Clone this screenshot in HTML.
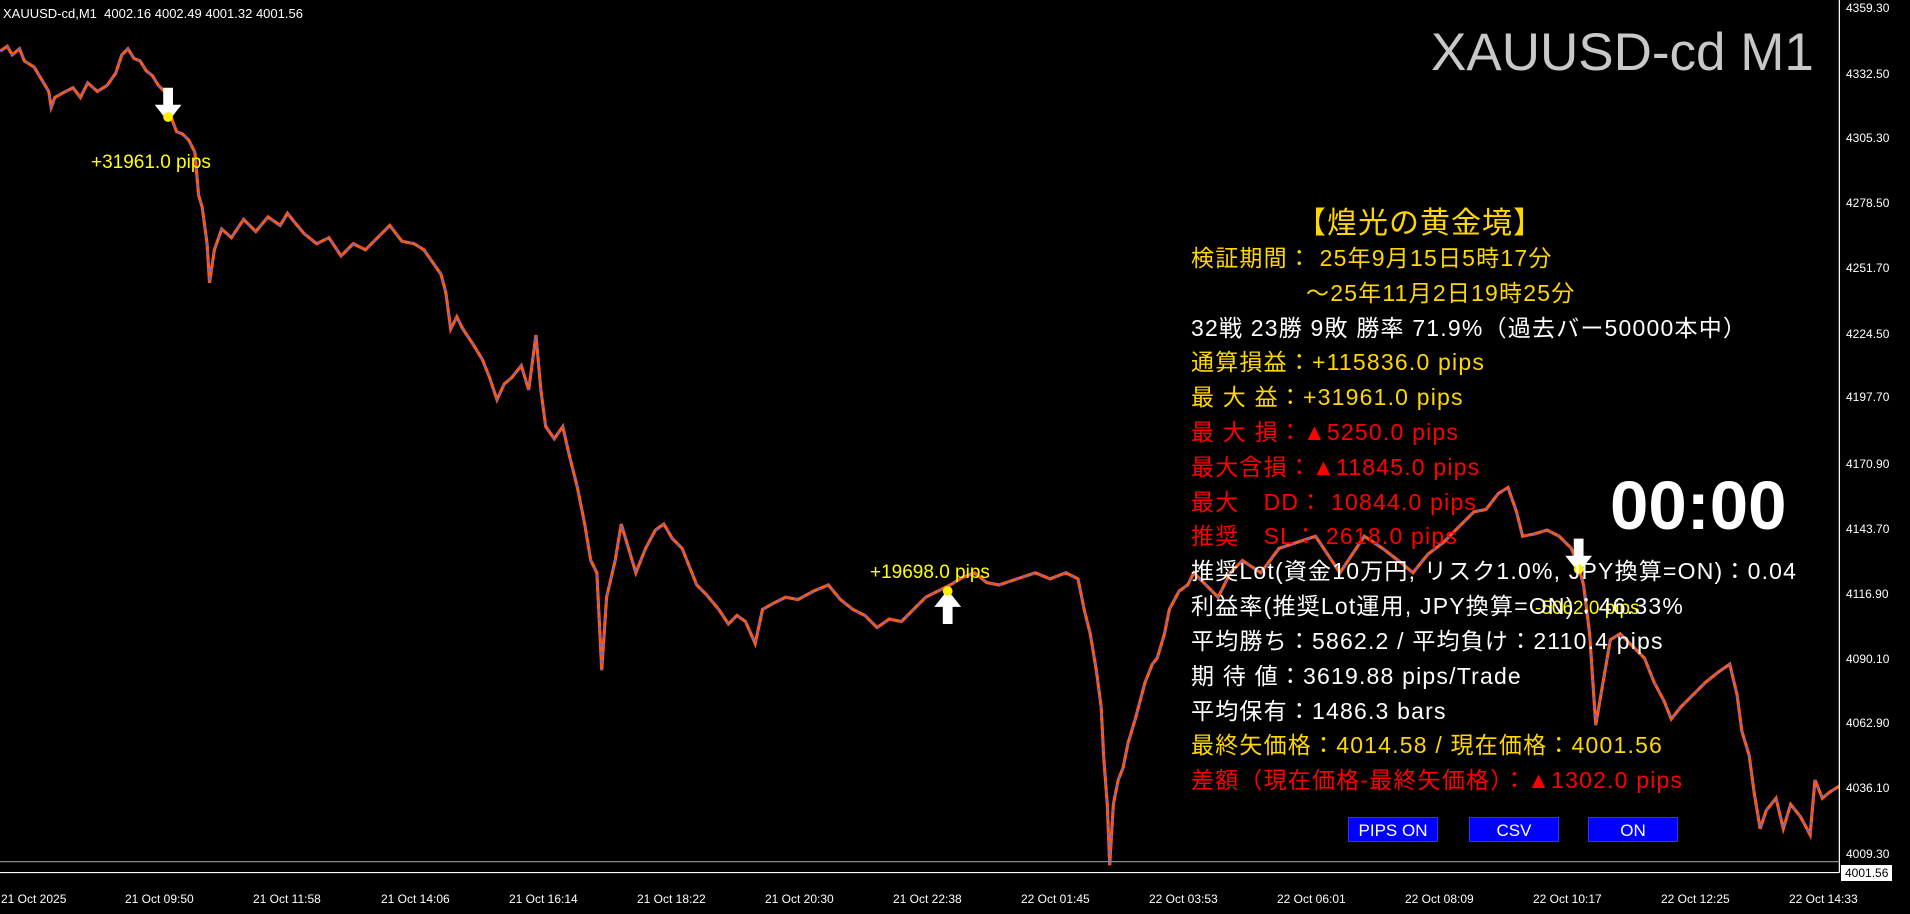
<!DOCTYPE html>
<html><head><meta charset="utf-8"><style>
html,body{margin:0;padding:0;background:#000;}
body{width:1910px;height:914px;position:relative;overflow:hidden;font-family:"Liberation Sans","Noto Sans CJK JP",sans-serif;}
.t{position:absolute;white-space:nowrap;}
.p{position:absolute;left:1191px;font-size:23px;line-height:28px;white-space:nowrap;letter-spacing:1.2px;font-family:"Liberation Sans","Noto Sans CJK JP",sans-serif;}
.y{color:#ffd700}.w{color:#fff}.r{color:#ff0000}
.ax{position:absolute;left:1846px;font-size:12px;color:#fff;line-height:14px;}
.tm{position:absolute;top:892px;font-size:12px;color:#fff;}
.btn{position:absolute;top:817px;width:90px;height:25px;background:#0000ff;color:#fff;font-size:17px;line-height:25px;text-align:center;border:1px solid #3030ff;box-sizing:border-box;}
</style></head><body>
<svg style="position:absolute;left:0;top:0" width="1910" height="914" viewBox="0 0 1568 750" preserveAspectRatio="none">
<polyline fill="none" stroke="#ff5a10" stroke-width="2.6" points="0,42 6,38 10,45 16,40 20,50 28,55 34,65 40,75 42,88 45,80 52,76 60,72 66,80 72,68 80,75 88,70 95,60 100,45 105,40 110,48 115,50 120,58 125,62 130,70 135,75 140,95 145,108 150,110 155,115 160,125 163,160 166,170 170,200 172,232 176,205 182,188 190,195 200,180 210,190 220,178 230,185 236,175 244,185 250,192 260,200 270,195 280,210 290,200 300,205 310,195 320,185 330,198 340,200 348,205 355,215 362,225 366,240 370,270 375,260 380,270 388,282 396,295 402,310 408,328 414,315 420,310 428,300 434,320 440,275 444,320 448,350 455,360 462,350 467,372 474,400 480,430 485,460 490,470 494,550 498,490 505,460 510,430 516,450 522,470 530,450 538,435 545,430 552,442 560,450 566,465 572,480 580,488 590,500 598,512 605,505 612,510 620,528 626,500 635,495 645,490 655,492 668,485 680,480 690,492 700,500 710,505 720,515 730,508 740,510 750,500 760,490 770,485 780,480 790,474 800,470 810,478 820,480 835,475 850,470 862,475 875,470 885,475 890,500 895,520 900,550 904,580 906,620 909,660 911,710 914,660 918,640 922,630 926,610 932,590 940,560 946,545 950,540 956,520 960,500 968,485 975,480 980,470 990,480 1000,490 1010,470 1020,460 1035,470 1050,450 1065,445 1080,440 1090,455 1100,470 1110,455 1120,440 1135,450 1148,460 1160,470 1172,455 1185,445 1200,430 1210,420 1220,418 1230,405 1238,400 1245,420 1250,440 1260,438 1270,435 1280,440 1290,450 1296,465 1300,480 1305,520 1310,595 1316,560 1322,525 1330,520 1340,530 1350,540 1358,560 1366,575 1372,590 1380,580 1390,570 1400,560 1410,552 1420,545 1426,570 1430,600 1436,620 1440,650 1445,680 1450,665 1458,655 1464,680 1470,660 1478,670 1486,685 1490,640 1496,655 1502,650 1510,645"/>
<polyline fill="none" stroke="#4a6cff" stroke-width="1.2" stroke-dasharray="3 4" points="0,42 6,38 10,45 16,40 20,50 28,55 34,65 40,75 42,88 45,80 52,76 60,72 66,80 72,68 80,75 88,70 95,60 100,45 105,40 110,48 115,50 120,58 125,62 130,70 135,75 140,95 145,108 150,110 155,115 160,125 163,160 166,170 170,200 172,232 176,205 182,188 190,195 200,180 210,190 220,178 230,185 236,175 244,185 250,192 260,200 270,195 280,210 290,200 300,205 310,195 320,185 330,198 340,200 348,205 355,215 362,225 366,240 370,270 375,260 380,270 388,282 396,295 402,310 408,328 414,315 420,310 428,300 434,320 440,275 444,320 448,350 455,360 462,350 467,372 474,400 480,430 485,460 490,470 494,550 498,490 505,460 510,430 516,450 522,470 530,450 538,435 545,430 552,442 560,450 566,465 572,480 580,488 590,500 598,512 605,505 612,510 620,528 626,500 635,495 645,490 655,492 668,485 680,480 690,492 700,500 710,505 720,515 730,508 740,510 750,500 760,490 770,485 780,480 790,474 800,470 810,478 820,480 835,475 850,470 862,475 875,470 885,475 890,500 895,520 900,550 904,580 906,620 909,660 911,710 914,660 918,640 922,630 926,610 932,590 940,560 946,545 950,540 956,520 960,500 968,485 975,480 980,470 990,480 1000,490 1010,470 1020,460 1035,470 1050,450 1065,445 1080,440 1090,455 1100,470 1110,455 1120,440 1135,450 1148,460 1160,470 1172,455 1185,445 1200,430 1210,420 1220,418 1230,405 1238,400 1245,420 1250,440 1260,438 1270,435 1280,440 1290,450 1296,465 1300,480 1305,520 1310,595 1316,560 1322,525 1330,520 1340,530 1350,540 1358,560 1366,575 1372,590 1380,580 1390,570 1400,560 1410,552 1420,545 1426,570 1430,600 1436,620 1440,650 1445,680 1450,665 1458,655 1464,680 1470,660 1478,670 1486,685 1490,640 1496,655 1502,650 1510,645"/>
<line x1="1510" y1="0" x2="1510" y2="716" stroke="#fff" stroke-width="1"/>
<line x1="0" y1="716" x2="1510" y2="716" stroke="#fff" stroke-width="1"/>
<line x1="0" y1="707" x2="1510" y2="707" stroke="#888" stroke-width="1"/>
<path d="M134,72 h8 v14 h7 l-11,14 l-11,-14 h7z" fill="#fff"/>
<circle cx="138" cy="96" r="4" fill="#ffee00"/>
<path d="M774,512 h8 v-14 h7 l-11,-14 l-11,14 h7z" fill="#fff"/>
<circle cx="778" cy="485" r="4" fill="#ffee00"/>
<path d="M1292,442 h8 v14 h7 l-11,14 l-11,-14 h7z" fill="#fff"/>
<circle cx="1296" cy="467" r="4" fill="#ffee00"/>
</svg>
<div class="t" style="left:3px;top:6px;font-size:13px;color:#fff">XAUUSD-cd,M1&nbsp; 4002.16 4002.49 4001.32 4001.56</div>
<div class="t" style="left:1431px;top:22px;font-size:53px;color:#c8c8c8;">XAUUSD-cd M1</div>
<div class="t" style="left:91px;top:152px;font-size:19px;color:#ffff00">+31961.0 pips</div>
<div class="t" style="left:870px;top:562px;font-size:19px;color:#ffff00">+19698.0 pips</div>
<div class="t" style="left:1535px;top:598px;font-size:19px;color:#ffff00">-5062.0 pips</div>

<div class="t" style="left:1296px;top:198px;font-size:30px;color:#ffd700;letter-spacing:1px">【煌光の黄金境】</div>
<div class="p y" style="top:244px">検証期間： 25年9月15日5時17分</div>
<div class="p y" style="top:279px;left:1306px">～25年11月2日19時25分</div>
<div class="p w" style="top:314px">32戦 23勝 9敗 勝率 71.9%（過去バー50000本中）</div>
<div class="p y" style="top:348px">通算損益：+115836.0 pips</div>
<div class="p y" style="top:383px">最 大 益：+31961.0 pips</div>
<div class="p r" style="top:418px">最 大 損：▲5250.0 pips</div>
<div class="p r" style="top:453px">最大含損：▲11845.0 pips</div>
<div class="p r" style="top:488px">最大　DD： 10844.0 pips</div>
<div class="p r" style="top:522px">推奨　SL： 2618.0 pips</div>
<div class="p w" style="top:557px">推奨Lot(資金10万円, リスク1.0%, JPY換算=ON)：0.04</div>
<div class="p w" style="top:592px">利益率(推奨Lot運用, JPY換算=ON)：46.33%</div>
<div class="p w" style="top:627px">平均勝ち：5862.2 / 平均負け：2110.4 pips</div>
<div class="p w" style="top:662px">期 待 値：3619.88 pips/Trade</div>
<div class="p w" style="top:697px">平均保有：1486.3 bars</div>
<div class="p y" style="top:731px">最終矢価格：4014.58 / 現在価格：4001.56</div>
<div class="p r" style="top:766px">差額（現在価格-最終矢価格）：▲1302.0 pips</div>
<div class="t" style="left:1610px;top:466px;font-size:69px;font-weight:bold;color:#fff">00:00</div>
<div class="btn" style="left:1348px">PIPS ON</div>
<div class="btn" style="left:1469px">CSV</div>
<div class="btn" style="left:1588px">ON</div>

<div class="ax" style="top:1px">4359.30</div>
<div class="ax" style="top:67px">4332.50</div>
<div class="ax" style="top:131px">4305.30</div>
<div class="ax" style="top:196px">4278.50</div>
<div class="ax" style="top:261px">4251.70</div>
<div class="ax" style="top:327px">4224.50</div>
<div class="ax" style="top:390px">4197.70</div>
<div class="ax" style="top:457px">4170.90</div>
<div class="ax" style="top:522px">4143.70</div>
<div class="ax" style="top:587px">4116.90</div>
<div class="ax" style="top:652px">4090.10</div>
<div class="ax" style="top:716px">4062.90</div>
<div class="ax" style="top:781px">4036.10</div>
<div class="ax" style="top:847px">4009.30</div>
<div class="ax" style="top:865px;left:1841px;background:#fff;color:#000;padding:1px 4px;">4001.56</div>

<div class="tm" style="left:1px">21 Oct 2025</div>
<div class="tm" style="left:125px">21 Oct 09:50</div>
<div class="tm" style="left:253px">21 Oct 11:58</div>
<div class="tm" style="left:381px">21 Oct 14:06</div>
<div class="tm" style="left:509px">21 Oct 16:14</div>
<div class="tm" style="left:637px">21 Oct 18:22</div>
<div class="tm" style="left:765px">21 Oct 20:30</div>
<div class="tm" style="left:893px">21 Oct 22:38</div>
<div class="tm" style="left:1021px">22 Oct 01:45</div>
<div class="tm" style="left:1149px">22 Oct 03:53</div>
<div class="tm" style="left:1277px">22 Oct 06:01</div>
<div class="tm" style="left:1405px">22 Oct 08:09</div>
<div class="tm" style="left:1533px">22 Oct 10:17</div>
<div class="tm" style="left:1661px">22 Oct 12:25</div>
<div class="tm" style="left:1789px">22 Oct 14:33</div>
</body></html>
